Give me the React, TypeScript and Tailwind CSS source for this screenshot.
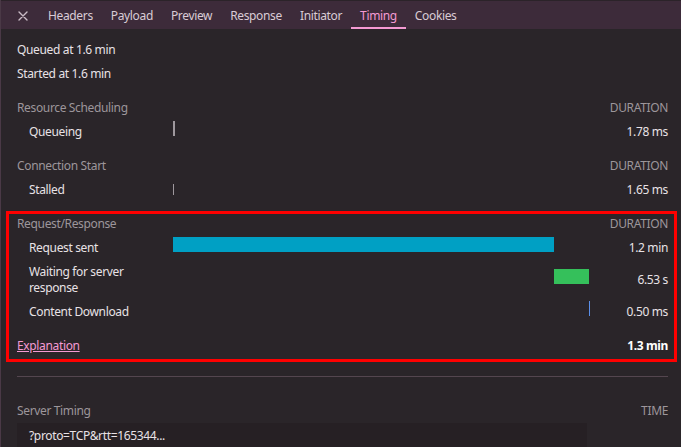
import React from "react";

const FONT = { fontFamily: '"Noto Sans", "Open Sans", sans-serif', letterSpacing: "-0.35px" };

function Tab({ label, active }: { label: string; active?: boolean }) {
  return (
    <div
      className={
        "h-full flex items-center px-[9px] pt-[3px] border-b-2 " +
        (active ? "border-[#f49ad3] text-[#f49ad3]" : "border-transparent text-[#d9cbd5]")
      }
    >
      {label}
    </div>
  );
}

function Heading({ left, right }: { left: string; right: string }) {
  return (
    <div className="h-[24px] flex items-center justify-between text-[#9d969b]">
      <span>{left}</span>
      <span>{right}</span>
    </div>
  );
}

function Row({
  label,
  value,
  bar,
  tall,
}: {
  label: React.ReactNode;
  value: string;
  bar?: React.ReactNode;
  tall?: boolean;
}) {
  return (
    <div className={"grid grid-cols-[156px_1fr_78px] items-center py-[4px] " + (tall ? "min-h-[40px]" : "min-h-[24px]")}>
      <div className="pl-[12px] leading-[16px] text-[#e8e2e6]">{label}</div>
      <div className="relative h-[16px]">{bar}</div>
      <div className="text-right text-[#e8e2e6] leading-[16px]">{value}</div>
    </div>
  );
}

export default function App() {
  return (
    <div className="w-[681px] h-[447px] overflow-hidden bg-[#2a2529] text-[12px] border-l border-[#4a3946] relative" style={FONT}>
      <div className="h-[29px] bg-[#3d2b3a] border-t border-[#2b2329] flex items-stretch">
        <div className="w-[43px] flex items-center justify-center pl-[1px] pt-[2px]">
          <svg width="10" height="10" viewBox="0 0 10 10">
            <path d="M1 1 L9 9 M9 1 L1 9" stroke="#c9bcc6" strokeWidth="1.4" strokeLinecap="round" />
          </svg>
        </div>
        <div className="flex items-stretch -ml-[5px]">
          <Tab label="Headers" />
          <Tab label="Payload" />
          <Tab label="Preview" />
          <Tab label="Response" />
          <Tab label="Initiator" />
          <Tab label="Timing" active />
          <Tab label="Cookies" />
        </div>
      </div>

      <div className="pl-[16px] pr-[13px] pt-[9px]">
        <div className="h-[24px] flex items-center text-[#e8e2e6]">Queued at 1.6 min</div>
        <div className="h-[24px] flex items-center text-[#e8e2e6]">Started at 1.6 min</div>

        <div className="mt-[10px]">
          <Heading left="Resource Scheduling" right="DURATION" />
          <Row
            label="Queueing"
            value="1.78 ms"
            bar={<div className="absolute left-0 top-[-3px] w-[2px] h-[15px] bg-[#9e989d]" />}
          />
        </div>

        <div className="mt-[10px]">
          <Heading left="Connection Start" right="DURATION" />
          <Row
            label="Stalled"
            value="1.65 ms"
            bar={<div className="absolute left-0 top-[2px] w-[1px] h-[11px] bg-[#9e989d]" />}
          />
        </div>

        <div className="mt-[10px] relative">
          <Heading left="Request/Response" right="DURATION" />
          <Row
            label="Request sent"
            value="1.2 min"
            bar={<div className="absolute left-0 top-[-3px] w-[381px] h-[15px] bg-[#00a0c4]" />}
          />
          <Row
            tall
            label={
              <>
                Waiting for server
                <br />
                response
              </>
            }
            value="6.53 s"
            bar={<div className="absolute left-[381px] top-[-3px] w-[35px] h-[15px] bg-[#35c05b]" />}
          />
          <Row
            label="Content Download"
            value="0.50 ms"
            bar={<div className="absolute left-[416px] top-[-3px] w-[1px] h-[15px] bg-[#5b8fe8]" />}
          />
          <div className="mt-[10px] h-[24px] flex items-center justify-between">
            <a className="text-[#f49ad3] underline">Explanation</a>
            <span className="font-bold text-white">1.3 min</span>
          </div>
          <div className="absolute left-[-11px] right-[-9px] top-[-1px] bottom-[-4px] border-[3px] border-[#ff0000] pointer-events-none" />
        </div>

        <div className="mt-[18px] h-px bg-[#54464f]" />

        <div className="mt-[22px]">
          <Heading left="Server Timing" right="TIME" />
          <div className="h-[25px] w-[570px] bg-[#262024] flex items-center pl-[12px] text-[#e8e2e6]">
            ?proto=TCP&amp;rtt=165344...
          </div>
        </div>
      </div>
    </div>
  );
}
